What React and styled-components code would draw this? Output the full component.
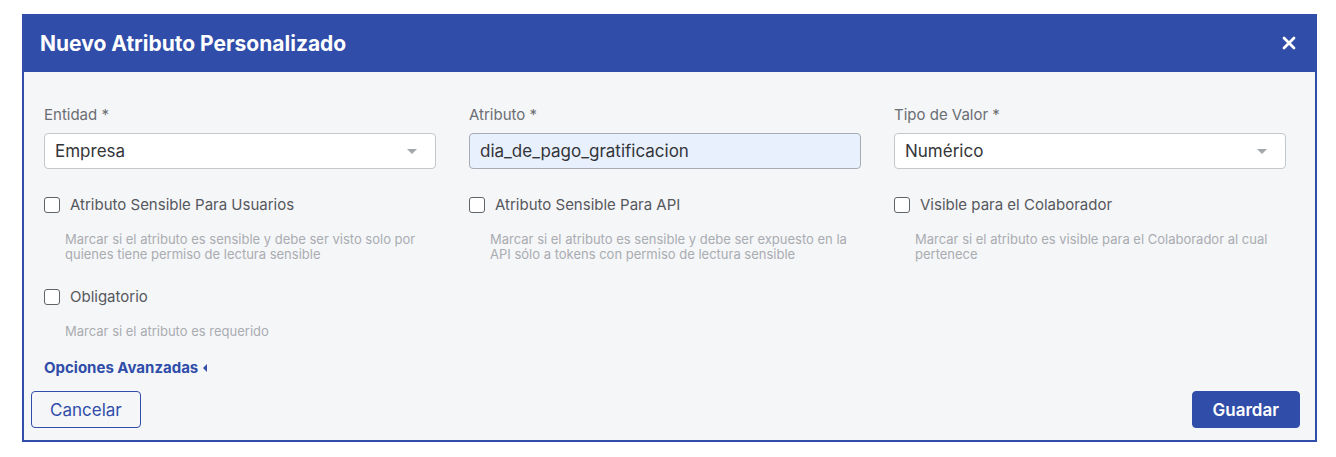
import React from "react";
import styled, { createGlobalStyle } from "styled-components";

const GlobalStyle = createGlobalStyle`
  body {
    margin: 0;
    background: #ffffff;
    font-family: Inter, "Noto Sans", sans-serif;
  }
  * {
    box-sizing: border-box;
  }
`;

const BLUE = "#2f4da9";

const Modal = styled.div`
  margin: 14px 0 0 22px;
  width: 1295px;
  border: 2px solid ${BLUE};
  border-top: none;
  background: #f5f6f8;
`;

const Header = styled.div`
  display: flex;
  align-items: center;
  justify-content: space-between;
  height: 58px;
  margin: 0 -2px;
  padding: 0 20px 0 18px;
  background: ${BLUE};
  color: #ffffff;
`;

const Title = styled.h2`
  margin: 0;
  font-size: 21px;
  font-weight: 700;
`;

const Close = styled.button`
  display: flex;
  align-items: center;
  justify-content: center;
  width: 16px;
  height: 16px;
  padding: 0;
  border: none;
  background: none;
  cursor: pointer;
`;

const Body = styled.div`
  padding: 33px 0 0 20px;
`;

const Grid = styled.div`
  display: grid;
  grid-template-columns: repeat(3, 392px);
  column-gap: 33px;
`;

const Field = styled.div`
  display: flex;
  flex-direction: column;
`;

const Label = styled.label`
  font-size: 15px;
  line-height: 20px;
  color: #6b6e73;
  margin-bottom: 8px;
`;

const Control = styled.div`
  display: flex;
  align-items: center;
  justify-content: space-between;
  height: 36px;
  padding: 0 18px 0 10px;
  border: 1px solid ${(p) => (p.$filled ? "#a7abb2" : "#c4c7cc")};
  border-radius: 4px;
  background: ${(p) => (p.$filled ? "#e8f0fe" : "#ffffff")};
  font-size: 17px;
  color: #333538;
`;

const Caret = styled.span`
  width: 0;
  height: 0;
  border-left: 5px solid transparent;
  border-right: 5px solid transparent;
  border-top: 5px solid #a3a6ab;
`;

const Options = styled(Grid)`
  margin-top: 26px;
  row-gap: 25px;
`;

const Option = styled.div`
  display: flex;
  flex-direction: column;
`;

const CheckRow = styled.label`
  display: flex;
  align-items: center;
  gap: 10px;
  font-size: 15px;
  line-height: 20px;
  color: #55585d;
`;

const Box = styled.span`
  width: 16px;
  height: 16px;
  border: 1.5px solid #606368;
  border-radius: 3px;
  background: #ffffff;
  flex-shrink: 0;
`;

const Help = styled.p`
  margin: 17px 0 0;
  padding-left: 21px;
  font-size: 13px;
  line-height: 15px;
  color: #a9acb1;
`;

const Advanced = styled.a`
  display: inline-flex;
  align-items: center;
  gap: 5px;
  margin-top: 19px;
  font-size: 15px;
  line-height: 20px;
  font-weight: 700;
  color: ${BLUE};
  cursor: pointer;
`;

const LeftCaret = styled.span`
  width: 0;
  height: 0;
  border-top: 4px solid transparent;
  border-bottom: 4px solid transparent;
  border-right: 4px solid ${BLUE};
`;

const Footer = styled.div`
  display: flex;
  justify-content: space-between;
  padding: 13px 15px 12px 7px;
`;

const Button = styled.button`
  height: 37px;
  padding: 0 ${(p) => (p.$primary ? "20px" : "18px")};
  border: 1px solid ${BLUE};
  border-radius: 4px;
  background: ${(p) => (p.$primary ? BLUE : "transparent")};
  color: ${(p) => (p.$primary ? "#ffffff" : BLUE)};
  font-family: Inter, "Noto Sans", sans-serif;
  font-size: 17px;
  font-weight: ${(p) => (p.$primary ? 600 : 400)};
  cursor: pointer;
`;

const fields = [
  { label: "Entidad *", value: "Empresa", select: true },
  { label: "Atributo *", value: "dia_de_pago_gratificacion", filled: true },
  { label: "Tipo de Valor *", value: "Numérico", select: true },
];

const options = [
  {
    label: "Atributo Sensible Para Usuarios",
    help: "Marcar si el atributo es sensible y debe ser visto solo por quienes tiene permiso de lectura sensible",
  },
  {
    label: "Atributo Sensible Para API",
    help: "Marcar si el atributo es sensible y debe ser expuesto en la API sólo a tokens con permiso de lectura sensible",
  },
  {
    label: "Visible para el Colaborador",
    help: "Marcar si el atributo es visible para el Colaborador al cual pertenece",
  },
  {
    label: "Obligatorio",
    help: "Marcar si el atributo es requerido",
  },
];

export default function App() {
  return (
    <>
      <GlobalStyle />
      <Modal>
        <Header>
          <Title>Nuevo Atributo Personalizado</Title>
          <Close aria-label="Cerrar">
            <svg width="14" height="14" viewBox="0 0 14 14">
              <path
                d="M2 2 L12 12 M12 2 L2 12"
                stroke="#ffffff"
                strokeWidth="2.8"
                strokeLinecap="round"
              />
            </svg>
          </Close>
        </Header>
        <Body>
          <Grid>
            {fields.map((f) => (
              <Field key={f.label}>
                <Label>{f.label}</Label>
                <Control $filled={f.filled}>
                  <span>{f.value}</span>
                  {f.select && <Caret />}
                </Control>
              </Field>
            ))}
          </Grid>
          <Options>
            {options.map((o) => (
              <Option key={o.label}>
                <CheckRow>
                  <Box />
                  {o.label}
                </CheckRow>
                <Help>{o.help}</Help>
              </Option>
            ))}
          </Options>
          <Advanced>
            Opciones Avanzadas
            <LeftCaret />
          </Advanced>
        </Body>
        <Footer>
          <Button>Cancelar</Button>
          <Button $primary>Guardar</Button>
        </Footer>
      </Modal>
    </>
  );
}
